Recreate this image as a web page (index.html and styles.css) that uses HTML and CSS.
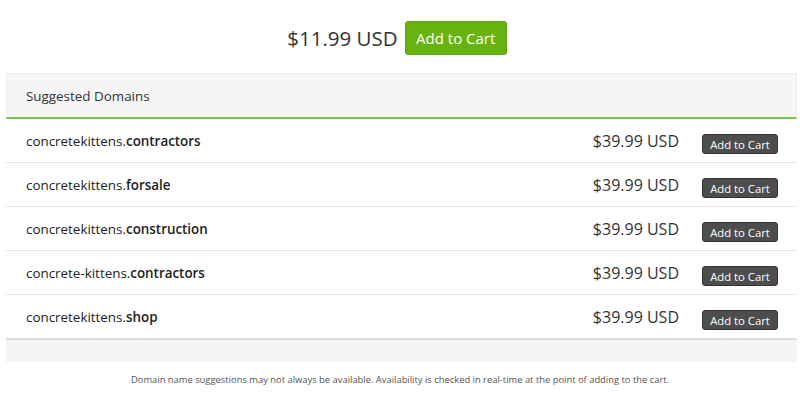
FILE: index.html
```html
<!DOCTYPE html>
<html>
<head>
<meta charset="utf-8">
<link rel="stylesheet" href="styles.css">
</head>
<body>
<div class="top">
  <span class="main-price">$11.99 USD</span>
  <button class="btn-green">Add to Cart</button>
</div>
<div class="panel">
  <div class="panel-head">Suggested Domains</div>
  <div class="row"><span class="domain">concretekittens.<b>contractors</b></span><span class="price">$39.99 USD</span><button class="btn-dark">Add to Cart</button></div>
  <div class="row"><span class="domain">concretekittens.<b>forsale</b></span><span class="price">$39.99 USD</span><button class="btn-dark">Add to Cart</button></div>
  <div class="row"><span class="domain">concretekittens.<b>construction</b></span><span class="price">$39.99 USD</span><button class="btn-dark">Add to Cart</button></div>
  <div class="row"><span class="domain">concrete-kittens.<b>contractors</b></span><span class="price">$39.99 USD</span><button class="btn-dark">Add to Cart</button></div>
  <div class="row last"><span class="domain">concretekittens.<b>shop</b></span><span class="price">$39.99 USD</span><button class="btn-dark">Add to Cart</button></div>
  <div class="panel-foot"></div>
</div>
<p class="note">Domain name suggestions may not always be available. Availability is checked in real-time at the point of adding to the cart.</p>
</body>
</html>
```
FILE: styles.css
```css
* { box-sizing: border-box; }
body {
  margin: 0;
  font-family: "Open Sans", "Liberation Sans", sans-serif;
  color: #333;
  background: #fff;
}
.top {
  height: 73px;
  display: flex;
  align-items: center;
  justify-content: center;
  gap: 7px;
  padding-top: 2px;
  padding-right: 6px;
}
.main-price {
  font-size: 20.5px;
  color: #333;
}
.btn-green {
  font-family: inherit;
  font-size: 15px;
  color: #fff;
  background: #67b310;
  border: 1px solid #5ea40d;
  border-radius: 3px;
  height: 34px;
  width: 102px;
  padding: 0;
}
.panel {
  margin: 0 3px 0 6px;
}
.panel-head {
  height: 46px;
  background: #f5f5f5;
  border: 1px solid #eee;
  border-bottom: 2px solid #76c34a;
  padding-left: 19px;
  display: flex;
  align-items: center;
  font-size: 13.4px;
  color: #333;
}
.row {
  height: 44px;
  display: flex;
  align-items: center;
  border-bottom: 1px solid #e6e6e6;
  padding: 0 19px 0 20px;
}
.row.last { border-bottom: 2px solid #ddd; height: 45px; }
.domain {
  flex: 1;
  font-size: 13.4px;
  color: #222;
}
.domain b { font-weight: 600; }
.price {
  font-size: 16px;
  color: #333;
  margin-right: 23px;
}
.btn-dark {
  font-family: inherit;
  font-size: 11.3px;
  color: #fff;
  background: #4d4d4d;
  border: 1px solid #333;
  border-radius: 3px;
  width: 76px;
  height: 20px;
  padding: 0;
  margin-top: 7px;
}
.panel-foot {
  height: 22px;
  background: #f5f5f5;
}
.note {
  margin: 11px 0 0;
  text-align: center;
  font-size: 9.4px;
  color: #555;
}
```
